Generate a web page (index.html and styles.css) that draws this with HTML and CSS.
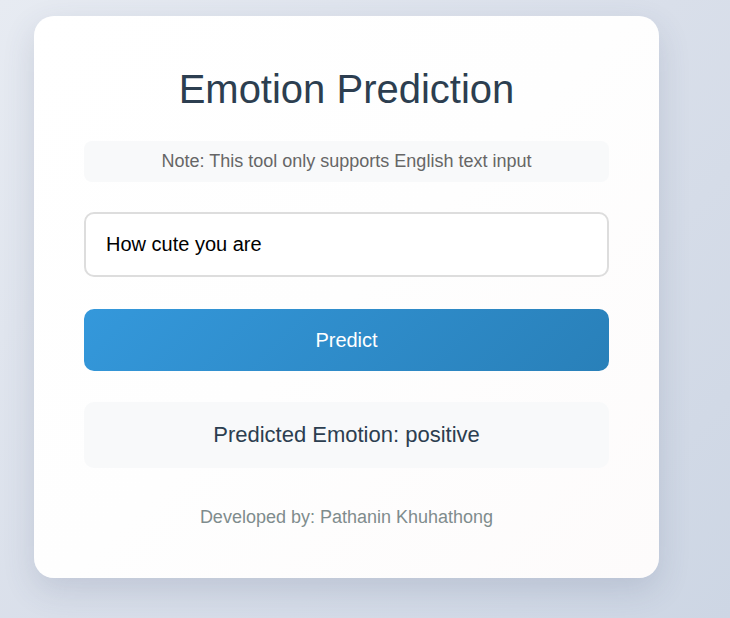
FILE: index.html
```html
<!DOCTYPE html>
<html lang="en">
<head>
<meta charset="utf-8">
<title>Emotion Prediction</title>
<link rel="stylesheet" href="styles.css">
</head>
<body>
  <main class="card">
    <h1 class="title">Emotion Prediction</h1>
    <div class="note">Note: This tool only supports English text input</div>
    <input class="text-input" type="text" value="How cute you are">
    <button class="predict-btn" type="button">Predict</button>
    <div class="result">Predicted Emotion: positive</div>
    <p class="footer">Developed by: Pathanin Khuhathong</p>
  </main>
</body>
</html>
```

FILE: styles.css
```css
* {
  box-sizing: border-box;
}

html, body {
  margin: 0;
  height: 100%;
}

body {
  font-family: "Liberation Sans", Arial, sans-serif;
  background: linear-gradient(135deg, #e7ebf2 0%, #d9dfea 50%, #cdd6e4 100%);
  padding: 16px 0 0 34px;
}

.card {
  width: 625px;
  padding: 50px;
  border-radius: 20px;
  background: linear-gradient(135deg, #ffffff 0%, #fefefe 50%, #fdfbfb 100%);
  box-shadow: 0 12px 32px rgba(60, 75, 110, 0.16);
  display: flex;
  flex-direction: column;
}

.title {
  margin: 0 0 29px;
  font-size: 40px;
  line-height: 46px;
  font-weight: 400;
  text-align: center;
  color: #2c3e50;
}

.note {
  background: #f8f9fa;
  border-radius: 8px;
  padding: 10px 15px;
  font-size: 18px;
  line-height: 21px;
  color: #666666;
  text-align: center;
  margin-bottom: 30px;
}

.text-input {
  display: block;
  width: 100%;
  font-family: inherit;
  font-size: 20px;
  line-height: 23px;
  padding: 19px 20px;
  border: 2px solid #dddddd;
  border-radius: 10px;
  color: #000;
  background: #fff;
  outline: none;
  margin: 0 0 32px;
}

.predict-btn {
  display: block;
  width: 100%;
  font-family: inherit;
  font-size: 20px;
  line-height: 22px;
  padding: 20px;
  border: none;
  border-radius: 10px;
  color: #fff;
  background: linear-gradient(135deg, #3498db 0%, #2980b9 100%);
  margin: 0 0 31px;
  cursor: pointer;
}

.result {
  background: #f8f9fa;
  border-radius: 10px;
  padding: 20px;
  font-size: 22px;
  line-height: 26px;
  color: #2c3e50;
  text-align: center;
  margin-bottom: 39px;
}

.footer {
  margin: 0;
  font-size: 18px;
  line-height: 21px;
  color: #7f8c8d;
  text-align: center;
}
```
